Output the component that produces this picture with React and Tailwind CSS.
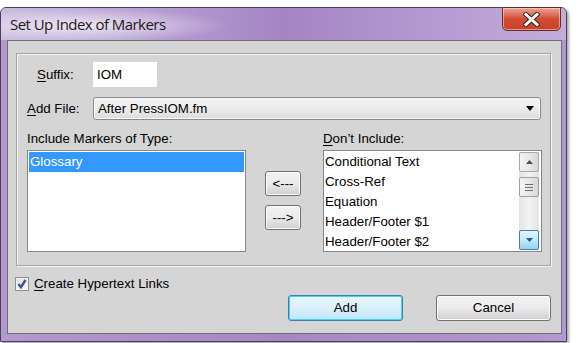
import React from 'react';

// Win7 "Set Up Index of Markers" dialog
const u = (ch) => <span className="underline underline-offset-[2px] decoration-1">{ch}</span>;

const WinButton = ({ children, className = '', isDefault = false }) => (
  <button
    className={`flex items-center justify-center rounded-[3px] border text-[13.3px] text-black leading-none ${
      isDefault
        ? 'border-[#3c7fb1] bg-gradient-to-b from-[#eaf6fd] via-[#d9f0fc] to-[#bee6fd] shadow-[inset_0_0_0_1px_#48d2fb]'
        : 'border-[#707070] bg-gradient-to-b from-[#f2f2f2] via-[#ebebeb] to-[#cfcfcf] shadow-[inset_0_0_0_1px_#fcfcfc]'
    } ${className}`}
  >
    {children}
  </button>
);

const Scrollbar = () => (
  <div className="w-[20px] my-[1px] mr-[2px] flex flex-col bg-gradient-to-r from-[#e3e3e3] via-[#f4f4f4] to-[#e3e3e3]">
    <div className="h-[20px] flex items-center justify-center rounded-[2px] border border-[#a8a8a8] bg-gradient-to-r from-[#f3f3f3] via-[#e8e8e8] to-[#d6d6d6]">
      <svg width="7" height="4" viewBox="0 0 7 4"><path d="M0 4 L3.5 0 L7 4 Z" fill="#4d4d4d" /></svg>
    </div>
    <div className="h-[20px] mt-[5px] flex flex-col items-center justify-center gap-[2px] rounded-[2px] border border-[#9d9d9d] bg-gradient-to-r from-[#f3f3f3] via-[#e8e8e8] to-[#d6d6d6]">
      <div className="w-[8px] h-[1px] bg-[#6e6e6e]" />
      <div className="w-[8px] h-[1px] bg-[#6e6e6e]" />
      <div className="w-[8px] h-[1px] bg-[#6e6e6e]" />
    </div>
    <div className="flex-1" />
    <div className="h-[20px] flex items-center justify-center rounded-[2px] border border-[#3c7fb1] bg-gradient-to-b from-[#e3f4fc] via-[#c4e8fa] to-[#98d1ef]">
      <svg width="7" height="4" viewBox="0 0 7 4"><path d="M0 0 L7 0 L3.5 4 Z" fill="#1d5f8f" /></svg>
    </div>
  </div>
);

const App = () => {
  const dontInclude = ['Conditional Text', 'Cross-Ref', 'Equation', 'Header/Footer $1', 'Header/Footer $2'];

  return (
    <div className="w-[578px] h-[343px] bg-white overflow-hidden pt-[7px] font-['Liberation_Sans',Arial,sans-serif] text-black">
      {/* window frame */}
      <div className="relative w-[567px] h-[335px] flex flex-col rounded-t-[6px] border border-[#4a3f5c] bg-gradient-to-r from-[#b198ce] via-[#a587c6] to-[#b198cf] shadow-[2px_2px_3px_rgba(0,0,0,0.35)]">
        {/* title bar */}
        <div className="relative h-[32px] rounded-t-[5px] flex items-center pl-[9px] bg-gradient-to-r from-[#cbbade] via-[#a385c4] to-[#c3addb]">
          <div className="absolute left-0 top-0 w-[230px] h-[32px] rounded-tl-[5px] bg-[radial-gradient(ellipse_at_35%_55%,rgba(255,255,255,0.7),rgba(255,255,255,0)_70%)]" />
          <span className="relative font-['Open_Sans',sans-serif] text-[15px] tracking-[-0.55px] text-[#1a1a1a] leading-none">Set Up Index of Markers</span>
          {/* close button */}
          <div className="absolute top-[-1px] right-[5px] w-[59px] h-[24px] flex items-center justify-center rounded-b-[5px] border border-[#6b2c24] bg-gradient-to-b from-[#e9a594] via-[#d24a32] to-[#c8432b] shadow-[inset_0_0_0_1px_rgba(255,220,210,0.55)]">
            <svg width="17" height="15" viewBox="0 0 17 15">
              <path d="M3 2.5 L14 12.5 M14 2.5 L3 12.5" stroke="#3b2a28" strokeWidth="5" strokeLinecap="square" />
              <path d="M3 2.5 L14 12.5 M14 2.5 L3 12.5" stroke="#ffffff" strokeWidth="3" strokeLinecap="square" />
            </svg>
          </div>
        </div>

        {/* client area */}
        <div className="ml-[6px] w-[555px] h-[294px] border border-[#6f6f6f] bg-[#d5d5d5] flex flex-col">
          {/* group box */}
          <div className="ml-[8px] mt-[12px] w-[535px] h-[213px] border border-[#a3a3a3] shadow-[inset_1px_1px_0_#f4f4f4,1px_1px_0_#f4f4f4] flex flex-col pl-[10px] pt-[8px] text-[13.3px]">
            {/* Suffix row */}
            <div className="flex items-center h-[25px]">
              <div className="w-[66px] pl-[10px]">{u('S')}uffix:</div>
              <div className="w-[64px] h-[25px] bg-white flex items-center pl-[4px]">IOM</div>
            </div>
            {/* Add File row */}
            <div className="flex items-center h-[23px] mt-[10px]">
              <div className="w-[66px]">{u('A')}dd File:</div>
              <div className="w-[448px] h-[23px] rounded-[3px] border border-[#8a8a8a] bg-gradient-to-b from-[#f4f4f4] via-[#ececec] to-[#dcdcdc] shadow-[inset_0_0_0_1px_#fafafa] flex items-center pl-[4px] pr-[6px]">
                <span className="flex-1">After PressIOM.fm</span>
                <svg width="8" height="5" viewBox="0 0 8 5"><path d="M0 0 L8 0 L4 5 Z" fill="#000" /></svg>
              </div>
            </div>
            {/* lists */}
            <div className="flex mt-[11px]">
              <div className="flex flex-col w-[219px]">
                <div className="h-[15px] leading-[15px]">Include Markers of Type:</div>
                <div className="mt-[4px] h-[102px] border border-[#828790] bg-white p-[1px]">
                  <div className="h-[20px] bg-[#3399ff] text-white flex items-center pl-[1px]">Glossary</div>
                </div>
              </div>
              <div className="flex flex-col ml-[19px] mr-[22px] pt-[40px] gap-[9px]">
                <WinButton className="w-[36px] h-[25px]">&lt;---</WinButton>
                <WinButton className="w-[36px] h-[25px]">---&gt;</WinButton>
              </div>
              <div className="flex flex-col w-[219px]">
                <div className="h-[15px] leading-[15px]">{u('D')}on’t Include:</div>
                <div className="mt-[4px] h-[102px] border border-[#828790] bg-white flex">
                  <div className="flex-1 pt-[1px] pl-[1px]">
                    {dontInclude.map((item) => (
                      <div key={item} className="h-[20px] flex items-center whitespace-nowrap">{item}</div>
                    ))}
                  </div>
                  <Scrollbar />
                </div>
              </div>
            </div>
          </div>

          {/* checkbox */}
          <div className="flex items-center ml-[7px] mt-[10px] h-[15px] text-[13.3px]">
            <div className="w-[14px] h-[14px] border border-[#8e8f8f] bg-gradient-to-br from-[#dcdcdc] to-[#fbfbfb] shadow-[inset_0_0_0_1px_#f4f4f4] flex items-center justify-center">
              <svg width="10" height="10" viewBox="0 0 10 10">
                <path d="M1.5 5 L4 8.2 L8.5 1" fill="none" stroke="#3d5297" strokeWidth="2.4" />
              </svg>
            </div>
            <span className="ml-[5px]">{u('C')}reate Hypertext Links</span>
          </div>

          {/* bottom buttons */}
          <div className="flex mt-[4px] ml-[280px] gap-[33px]">
            <WinButton isDefault className="w-[115px] h-[26px]">Add</WinButton>
            <WinButton className="w-[115px] h-[26px]">Cancel</WinButton>
          </div>
        </div>
      </div>
    </div>
  );
};

export default App;
